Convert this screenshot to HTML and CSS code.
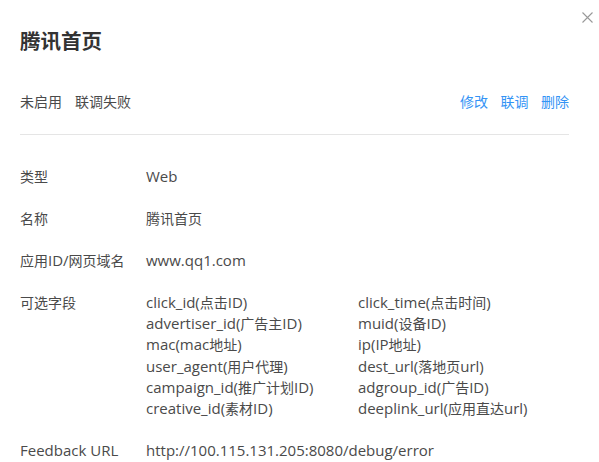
FILE: index.html
```html
<!DOCTYPE html>
<html lang="zh-CN">
<head>
<meta charset="utf-8">
<title>腾讯首页</title>
<link rel="stylesheet" href="styles.css">
</head>
<body>
<div class="dialog">
  <button class="close" aria-label="关闭">
    <svg width="11" height="11" viewBox="0 0 11 11"><path d="M0.5 0.5 L10.5 10.5 M10.5 0.5 L0.5 10.5" stroke="#999" stroke-width="1.1" fill="none"/></svg>
  </button>
  <h1 class="title">腾讯首页</h1>
  <div class="status-bar">
    <div class="status">
      <span class="tag">未启用</span>
      <span class="tag">联调失败</span>
    </div>
    <div class="actions">
      <a class="link">修改</a>
      <a class="link">联调</a>
      <a class="link">删除</a>
    </div>
  </div>
  <dl class="info">
    <div class="row"><dt>类型</dt><dd><span class="en">Web</span></dd></div>
    <div class="row"><dt>名称</dt><dd>腾讯首页</dd></div>
    <div class="row"><dt>应用<span class="en">ID/</span>网页域名</dt><dd><span class="en">www.qq1.com</span></dd></div>
    <div class="row"><dt>可选字段</dt>
      <dd class="fields">
        <span><span class="en">click_id(</span>点击<span class="en">ID)</span></span>
        <span><span class="en">click_time(</span>点击时间<span class="en">)</span></span>
        <span><span class="en">advertiser_id(</span>广告主<span class="en">ID)</span></span>
        <span><span class="en">muid(</span>设备<span class="en">ID)</span></span>
        <span><span class="en">mac(mac</span>地址<span class="en">)</span></span>
        <span><span class="en">ip(IP</span>地址<span class="en">)</span></span>
        <span><span class="en">user_agent(</span>用户代理<span class="en">)</span></span>
        <span><span class="en">dest_url(</span>落地页<span class="en">url)</span></span>
        <span><span class="en">campaign_id(</span>推广计划<span class="en">ID)</span></span>
        <span><span class="en">adgroup_id(</span>广告<span class="en">ID)</span></span>
        <span><span class="en">creative_id(</span>素材<span class="en">ID)</span></span>
        <span><span class="en">deeplink_url(</span>应用直达<span class="en">url)</span></span>
      </dd>
    </div>
    <div class="row"><dt><span class="en">Feedback URL</span></dt><dd><span class="en">http://100.115.131.205:8080/debug/error</span></dd></div>
  </dl>
</div>
</body>
</html>
```
FILE: styles.css
```css
html, body {
  margin: 0;
  padding: 0;
  background: #fff;
}
body {
  font-family: "Open Sans", "Noto Sans CJK SC", sans-serif;
  font-size: 14px;
  color: #4a4a4a;
}
.en {
  font-size: 15px;
}
.dialog {
  position: relative;
  width: 549px;
  padding: 26px 30px 0 20px;
}
.close {
  position: absolute;
  left: 582px;
  top: 12px;
  width: 11px;
  height: 11px;
  padding: 0;
  border: 0;
  background: none;
  display: block;
}
.close svg { display: block; }
.title {
  margin: 0;
  font-size: 20.5px;
  line-height: 28px;
  font-weight: bold;
  color: #333;
  font-family: "Noto Sans CJK SC", sans-serif;
}
.status-bar {
  display: flex;
  justify-content: space-between;
  margin-top: 37px;
  padding-bottom: 22px;
  border-bottom: 1px solid #e5e5e5;
  line-height: 21.3px;
}
.status {
  display: flex;
  gap: 13px;
}
.actions {
  display: flex;
  gap: 12.5px;
}
.link {
  color: #3393f5;
  cursor: pointer;
}
.info {
  margin: 31px 0 0;
  display: flex;
  flex-direction: column;
  gap: 20.5px;
  line-height: 21.3px;
}
.row {
  display: flex;
}
.row dt {
  width: 126px;
  flex: none;
}
.row dd {
  margin: 0;
}
.fields {
  display: grid;
  grid-template-columns: 212px 212px;
}
```
